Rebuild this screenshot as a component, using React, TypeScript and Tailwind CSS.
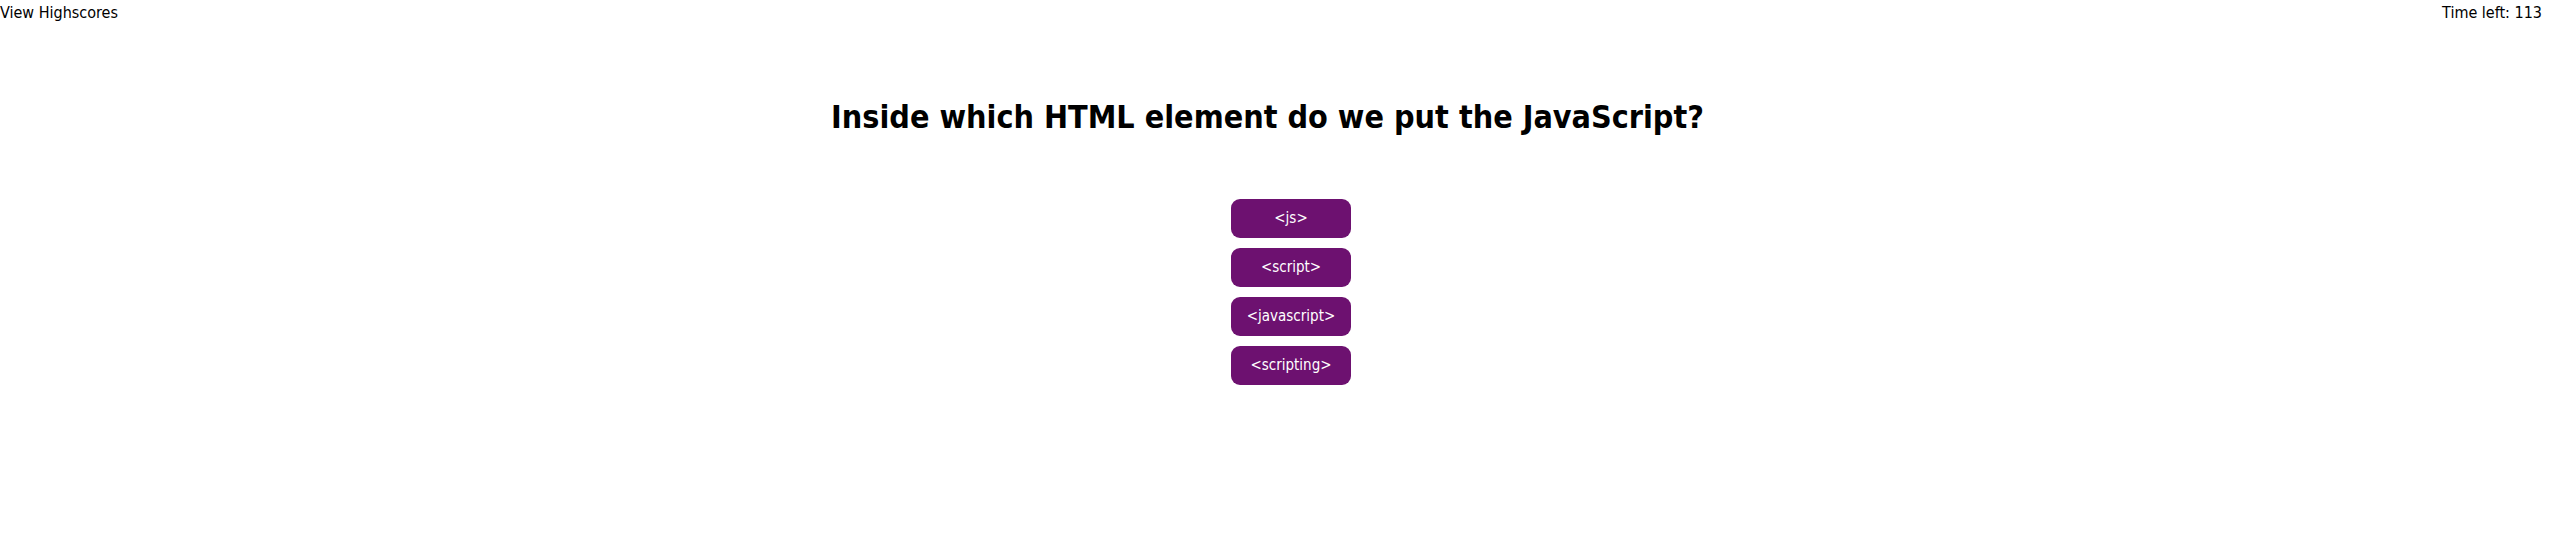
const answers = ['<js>', '<script>', '<javascript>', '<scripting>'];

export default function App() {
  return (
    <div
      className="min-h-[557px] bg-white text-black"
      style={{ fontFamily: '"DejaVu Sans Condensed", "DejaVu Sans", sans-serif', fontStretch: 'condensed' }}
    >
      <header className="flex justify-between pt-[3px] text-[16px] leading-[19px]">
        <span>View Highscores</span>
        <span className="pr-[7px]">Time left: 113</span>
      </header>

      <main className="flex flex-col items-center">
        <h1 className="mt-[76px] mr-[14px] text-[32px] leading-[38px] font-bold">
          Inside which HTML element do we put the JavaScript?
        </h1>

        <ul className="mt-[63px] ml-[33px] flex flex-col gap-[10px]">
          {answers.map((answer) => (
            <li key={answer}>
              <button className="flex h-[39px] w-[120px] items-center justify-center rounded-[9px] bg-[#6d1170] text-[15px] text-white">
                {answer}
              </button>
            </li>
          ))}
        </ul>
      </main>
    </div>
  );
}
